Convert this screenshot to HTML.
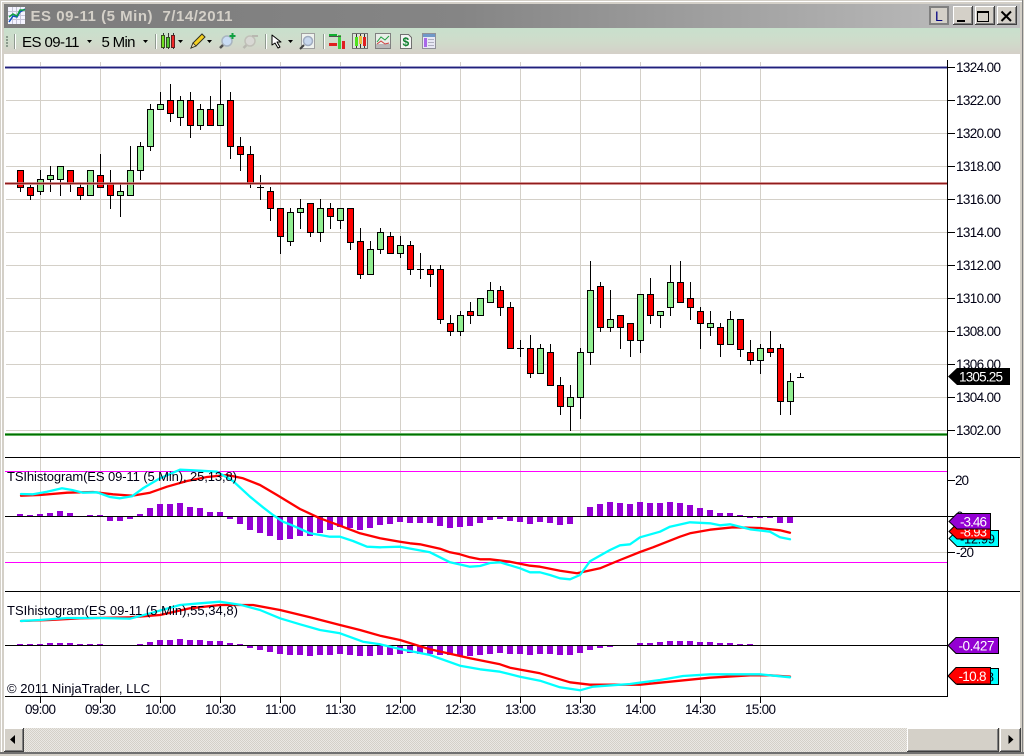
<!DOCTYPE html>
<html>
<head>
<meta charset="utf-8">
<title>ES 09-11 (5 Min) 7/14/2011</title>
<style>
html,body{margin:0;padding:0;background:#d4d0c8;width:1024px;height:756px;overflow:hidden}
svg{display:block}
text{font-family:"Liberation Sans",Arial,sans-serif;font-size:13px;fill:#000014}
.a text{font-size:13.5px}
.w{fill:#fff}
</style>
</head>
<body>
<svg width="1024" height="756" viewBox="0 0 1024 756" xmlns="http://www.w3.org/2000/svg">
<defs>
<linearGradient id="tb" x1="0" x2="1" y1="0" y2="0"><stop offset="0" stop-color="#7c7c7c"/><stop offset=".45" stop-color="#858585"/><stop offset="1" stop-color="#c0c0c0"/></linearGradient>
<linearGradient id="tl" x1="0" x2="0" y1="0" y2="1"><stop offset="0" stop-color="#c8e0cc"/><stop offset=".5" stop-color="#cfdccb"/><stop offset="1" stop-color="#d4d0c8"/></linearGradient>
<pattern id="dith" width="2" height="2" patternUnits="userSpaceOnUse"><rect width="2" height="2" fill="#eae8e4"/><rect width="1" height="1" fill="#d4d0c8"/><rect x="1" y="1" width="1" height="1" fill="#d4d0c8"/></pattern>
</defs>

<!-- window frame -->
<rect width="1024" height="756" fill="#d4d0c8"/>
<rect x="1" y="1" width="1022" height="1" fill="#fff"/>
<rect x="1" y="1" width="1" height="752" fill="#fff"/>
<rect x="1022" y="0" width="1" height="754" fill="#808080"/>
<rect x="0" y="752" width="1024" height="2" fill="#707070"/>
<rect x="4" y="4" width="1016" height="24" fill="url(#tb)"/>

<!-- title icon -->
<g shape-rendering="crispEdges">
<rect x="8" y="7" width="17" height="17" fill="#f4f4ff"/>
<path d="M8 11.5h17M8 15.5h17M8 19.5h17M12.5 7v17M16.5 7v17M20.5 7v17" stroke="#c4c4d8" fill="none"/>
</g>
<path d="M9 22l4-6 4 1 3-5 5-3" stroke="#1050c0" stroke-width="1.5" fill="none"/>
<path d="M9 17l4-3 4 2 3-6 5 0" stroke="#10a040" stroke-width="1.5" fill="none"/>
<text x="30.5" y="21" textLength="202" style="font-size:15px;font-weight:bold;fill:#d4d0c8">ES 09-11 (5 Min)&#160;&#160;7/14/2011</text>

<!-- window buttons -->
<g shape-rendering="crispEdges">
<rect x="929" y="6" width="20" height="19" fill="#808080"/><rect x="931" y="8" width="16" height="15" fill="#d4d0c8"/>
<rect x="953" y="6" width="20" height="19" fill="#404040"/><rect x="953" y="6" width="19" height="18" fill="#fff"/><rect x="954" y="7" width="18" height="17" fill="#808080"/><rect x="954" y="7" width="17" height="16" fill="#d4d0c8"/>
<rect x="975" y="6" width="20" height="19" fill="#404040"/><rect x="975" y="6" width="19" height="18" fill="#fff"/><rect x="976" y="7" width="18" height="17" fill="#808080"/><rect x="976" y="7" width="17" height="16" fill="#d4d0c8"/>
<rect x="997" y="6" width="20" height="19" fill="#404040"/><rect x="997" y="6" width="19" height="18" fill="#fff"/><rect x="998" y="7" width="18" height="17" fill="#808080"/><rect x="998" y="7" width="17" height="16" fill="#d4d0c8"/>
<rect x="957" y="20" width="8" height="2" fill="#000"/>
<path d="M977.5 11.5h11v10h-11z" fill="none" stroke="#000"/><rect x="977" y="11" width="12" height="2" fill="#000"/>
</g>
<path d="M1001.5 11.5l9.5 9.5M1011 11.5l-9.5 9.5" stroke="#000" stroke-width="2" fill="none"/>
<text x="935" y="21" style="font-size:14px;fill:#000080">L</text>

<!-- toolbar -->
<rect x="4" y="28" width="1016" height="26" fill="url(#tl)"/>
<g shape-rendering="crispEdges">
<rect x="6" y="36" width="2" height="2" fill="#8a9a8c"/><rect x="6" y="39" width="2" height="2" fill="#8a9a8c"/><rect x="6" y="42" width="2" height="2" fill="#8a9a8c"/><rect x="6" y="45" width="2" height="2" fill="#8a9a8c"/>
<path d="M14.5 34v15M155.5 34v15M265.5 34v15M323.5 34v15" stroke="#8f9a90"/>
<path d="M15.5 34v15M156.5 34v15M266.5 34v15M324.5 34v15" stroke="#fff"/>
</g>
<text x="22" y="47" textLength="57.5" style="font-size:15px;fill:#000">ES 09-11</text>
<text x="101.5" y="47" textLength="34" style="font-size:15px;fill:#000">5 Min</text>
<path d="M87 40h5l-2.500 3zM143 40h5l-2.500 3zM178 40h5l-2.500 3zM207 40h5l-2.500 3zM288 40h5l-2.500 3z" fill="#000"/>

<!-- candle icon -->
<g shape-rendering="crispEdges">
<path d="M163.500 33v16M168.500 33v16M173.500 33v16" stroke="#333"/>
<path d="M161.500 35.500h3v12h-3z" fill="#70e020" stroke="#385020"/>
<path d="M166.500 37.500h3v10h-3z" fill="#50c830" stroke="#305020"/>
<path d="M171.500 35.500h3v12h-3z" fill="#f02828" stroke="#602020"/>
</g>
<!-- pencil -->
<path d="M191 48l2-5 9-9 3 3-9 9z" fill="#f4d020" stroke="#303020" stroke-width="1"/>
<path d="M191 48l2-5 3 3z" fill="#f0e0b0" stroke="#303020" stroke-width=".8"/>
<!-- zoom in -->
<path d="M220 48l4-4" stroke="#505050" stroke-width="2.500"/>
<circle cx="227" cy="41" r="5" fill="#c8dcf4" stroke="#a8b4c0" stroke-width="1.500"/>
<path d="M232.500 33v6M229.500 36h6" stroke="#10a040" stroke-width="2"/>
<!-- zoom out -->
<path d="M243.500 48l4-4" stroke="#b8b8b0" stroke-width="2.500"/>
<circle cx="250" cy="41" r="5" fill="#d8d8d4" stroke="#c0c0b8" stroke-width="1.500"/>
<path d="M252 36h6" stroke="#b8b8b0" stroke-width="2"/>
<!-- cursor -->
<path d="M272 35v10l3-2 3 5 2-1-3-5h4z" fill="#fff" stroke="#000" stroke-width="1" stroke-linejoin="round"/>
<!-- magnifier box -->
<rect x="301.500" y="33.500" width="13" height="15" fill="#eef2ee" stroke="#a0a0a0"/>
<circle cx="308" cy="41" r="4.500" fill="#c8d8ee" stroke="#a0acc0" stroke-width="1.500"/>
<path d="M300 49l4-4" stroke="#404040" stroke-width="2"/>
<!-- data series -->
<g shape-rendering="crispEdges">
<rect x="329" y="34" width="8" height="2" fill="#10b030"/><rect x="329" y="43" width="8" height="3" fill="#e02020"/>
<rect x="338" y="35" width="3" height="14" fill="#40d040"/><rect x="342" y="41" width="3" height="8" fill="#e02020"/>
<path d="M329 36.500h12" stroke="#505050"/>
<!-- chart box -->
<rect x="352.500" y="33.500" width="15" height="15" fill="#dce4d8" stroke="#707070"/>
<path d="M356.500 34v14M360.500 34v14M364.500 34v14" stroke="#333"/>
<rect x="355" y="37" width="3" height="9" fill="#50e020"/><rect x="359" y="36" width="3" height="8" fill="#e8c040"/><rect x="363" y="37" width="3" height="9" fill="#e02020"/>
<!-- strategies -->
<rect x="375.500" y="33.500" width="15" height="15" fill="#e8eee8" stroke="#808080"/>
<rect x="376" y="44" width="14" height="4" fill="#b8b8b8"/>
</g>
<path d="M377 42l4-5 4 3 4-4" stroke="#20a040" fill="none"/>
<path d="M377 44l4-3 4 3 4-1" stroke="#d04040" fill="none"/>
<!-- dollar doc -->
<path d="M400.500 34.500h8l3 3v11h-11z" fill="#f4f4f4" stroke="#707070" shape-rendering="crispEdges"/>
<text x="402.500" y="46" style="font-size:12px;font-weight:bold;fill:#108030">$</text>
<!-- properties -->
<g shape-rendering="crispEdges">
<rect x="422.500" y="33.500" width="13" height="15" fill="#e8e8f4" stroke="#909098"/>
<rect x="423" y="34" width="12" height="3" fill="#7098c8"/>
<rect x="424" y="38" width="3" height="9" fill="#a868e8"/>
<path d="M428 39.500h6M428 42.500h6M428 45.500h6" stroke="#b0b0c0"/>
</g>

<!-- chart background -->
<rect x="4" y="54" width="1016" height="674" fill="#fff"/>

<!-- grid -->
<g shape-rendering="crispEdges" stroke="#d4d0c8" fill="none">
<path d="M40.500 62V696M100.500 62V696M160.500 62V696M220.500 62V696M280.500 62V696M340.500 62V696M400.500 62V696M460.500 62V696M520.500 62V696M580.500 62V696M640.500 62V696M700.500 62V696M760.500 62V696"/>
<path d="M6 67.500H947M6 100.500H947M6 133.500H947M6 166.500H947M6 199.500H947M6 232.500H947M6 265.500H947M6 298.500H947M6 331.500H947M6 364.500H947M6 397.500H947M6 430.500H947M6 552.500H947"/>
</g>

<!-- wicks -->
<path shape-rendering="crispEdges" stroke="#000" fill="none" d="M20.500 170V192M30.500 185V200M40.500 170V195M50.500 166V192M60.500 166V196M70.500 170V192M80.500 184V200M100.500 154V187M110.500 170V209M120.500 184V217M130.500 146V195M140.500 142V180M150.500 104V151M160.500 92V109M170.500 84V122M180.500 96V126M190.500 92V138M200.500 104V130M210.500 96V125M220.500 80V125M230.500 92V159M240.500 137V171M250.500 146V188M260.500 175V200M270.500 187V221M280.500 208V254M290.500 208V246M300.500 199V229M310.500 203V237M320.500 199V242M330.500 203V229M340.500 208V229M350.500 208V250M360.500 228V279M370.500 241V274M380.500 228V254M390.500 232V253M400.500 236V258M410.500 241V275M420.500 253V279M430.500 265V287M440.500 265V324M450.500 315V336M460.500 311V336M470.500 302V324M490.500 282V302M500.500 286V316M510.500 302V348M520.500 340V357M530.500 335V378M540.500 344V373M550.500 344V385M560.500 377V415M570.500 385V431M580.500 348V419M590.500 261V365M600.500 282V332M610.500 290V332M620.500 315V349M630.500 323V357M640.500 294V353M650.500 278V324M660.500 311V328M670.500 265V316M680.500 261V302M690.500 282V320M700.500 307V349M710.500 311V336M720.500 323V357M730.500 311V344M740.500 319V357M750.500 340V365M760.500 344V374M770.500 331V357M780.500 344V415M790.500 373V415M800.500 373V377M257 187.500H264M417 269.500H424M517 348.500H524M797 377.500H804"/>

<!-- red bodies -->
<path shape-rendering="crispEdges" fill="#ff0000" stroke="#000" d="M17.500 170.500h6v17h-6zM27.500 187.500h6v8h-6zM67.500 170.500h6v13h-6zM77.500 187.500h6v8h-6zM97.500 175.500h6v12h-6zM107.500 183.500h6v12h-6zM167.500 100.500h6v13h-6zM187.500 100.500h6v25h-6zM207.500 109.500h6v16h-6zM227.500 100.500h6v46h-6zM237.500 146.500h6v8h-6zM247.500 154.500h6v29h-6zM267.500 191.500h6v17h-6zM277.500 208.500h6v28h-6zM307.500 203.500h6v29h-6zM327.500 208.500h6v8h-6zM347.500 208.500h6v34h-6zM357.500 241.500h6v33h-6zM387.500 236.500h6v17h-6zM407.500 245.500h6v24h-6zM427.500 269.500h6v5h-6zM437.500 269.500h6v50h-6zM447.500 323.500h6v8h-6zM467.500 311.500h6v4h-6zM497.500 290.500h6v17h-6zM507.500 307.500h6v41h-6zM527.500 348.500h6v25h-6zM547.500 352.500h6v33h-6zM557.500 385.500h6v21h-6zM597.500 286.500h6v41h-6zM617.500 315.500h6v12h-6zM627.500 323.500h6v17h-6zM647.500 294.500h6v21h-6zM677.500 282.500h6v20h-6zM687.500 298.500h6v9h-6zM697.500 311.500h6v12h-6zM717.500 327.500h6v17h-6zM737.500 319.500h6v30h-6zM747.500 352.500h6v8h-6zM767.500 348.500h6v4h-6zM777.500 348.500h6v53h-6z"/>
<!-- green bodies -->
<path shape-rendering="crispEdges" fill="#90ee90" stroke="#000" d="M37.500 179.500h6v12h-6zM47.500 175.500h6v4h-6zM57.500 166.500h6v13h-6zM87.500 170.500h6v25h-6zM117.500 191.500h6v4h-6zM127.500 170.500h6v25h-6zM137.500 146.500h6v24h-6zM147.500 109.500h6v37h-6zM157.500 104.500h6v5h-6zM177.500 100.500h6v17h-6zM197.500 109.500h6v16h-6zM217.500 104.500h6v21h-6zM287.500 212.500h6v29h-6zM297.500 208.500h6v4h-6zM317.500 208.500h6v24h-6zM337.500 208.500h6v12h-6zM367.500 249.500h6v25h-6zM377.500 232.500h6v17h-6zM397.500 245.500h6v8h-6zM457.500 315.500h6v16h-6zM477.500 298.500h6v17h-6zM487.500 290.500h6v12h-6zM537.500 348.500h6v25h-6zM567.500 397.500h6v9h-6zM577.500 352.500h6v45h-6zM587.500 290.500h6v62h-6zM607.500 319.500h6v8h-6zM637.500 294.500h6v46h-6zM657.500 311.500h6v4h-6zM667.500 282.500h6v25h-6zM707.500 323.500h6v4h-6zM727.500 319.500h6v25h-6zM757.500 348.500h6v12h-6zM787.500 381.500h6v20h-6z"/>

<!-- horizontal drawn lines -->
<g shape-rendering="crispEdges">
<rect x="5" y="66" width="942" height="3" fill="#9a9ac8"/><rect x="5" y="67" width="942" height="1" fill="#20207a"/>
<rect x="5" y="182" width="942" height="3" fill="#c87878" fill-opacity=".8"/><rect x="5" y="183" width="942" height="1" fill="#901c1c"/>
<rect x="5" y="433" width="942" height="3" fill="#60b060"/><rect x="5" y="434" width="942" height="1" fill="#007000"/>
</g>

<!-- panel lines -->
<g shape-rendering="crispEdges" fill="none">
<path d="M5 471.500H947M5 562.500H947" stroke="#ff00ff"/>
</g>

<!-- histogram 1 -->
<path shape-rendering="crispEdges" stroke="#9400d3" stroke-width="6" fill="none" d="M20 514V516M30 515V516M40 514V516M50 513V516M60 511V516M70 513V516M90 515V516M100 515V516M110 517V521M120 517V521M130 517V519M140 514V516M150 508V516M160 504V516M170 504V516M180 503V516M190 507V516M200 508V516M210 512V516M220 512V516M230 517V519M240 517V524M250 517V530M260 517V533M270 517V536M280 517V540M290 517V539M300 517V536M310 517V536M320 517V533M330 517V530M340 517V527M350 517V528M360 517V530M370 517V528M380 517V525M390 517V524M400 517V522M410 517V523M420 517V523M430 517V523M440 517V526M450 517V528M460 517V527M470 517V526M480 517V523M490 517V520M500 517V519M510 517V521M520 517V522M530 517V524M540 517V522M550 517V523M560 517V525M570 517V524M590 507V516M600 504V516M610 502V516M620 503V516M630 504V516M640 502V516M650 503V516M660 503V516M670 502V516M680 503V516M690 505V516M700 508V516M710 510V516M720 513V516M730 513V516M740 515V516M750 517V518M760 517V518M770 517V518M780 517V523M790 517V523"/>
<!-- histogram 2 -->
<path shape-rendering="crispEdges" stroke="#9400d3" stroke-width="6" fill="none" d="M20 644V645M30 644V645M40 644V645M50 643V645M60 643V645M70 643V645M80 644V645M90 644V645M100 644V645M140 644V645M150 642V645M160 640V645M170 640V645M180 639V645M190 640V645M200 640V645M210 641V645M220 641V645M230 643V645M240 644V645M250 646V648M260 646V650M270 646V652M280 646V654M290 646V655M300 646V655M310 646V656M320 646V655M330 646V655M340 646V654M350 646V655M360 646V656M370 646V656M380 646V655M390 646V655M400 646V654M410 646V653M420 646V654M430 646V654M440 646V655M450 646V655M460 646V656M470 646V656M480 646V655M490 646V654M500 646V653M510 646V654M520 646V654M530 646V655M540 646V654M550 646V654M560 646V655M570 646V655M580 646V653M590 646V650M600 646V648M610 646V647M640 643V645M650 643V645M660 642V645M670 641V645M680 641V645M690 641V645M700 642V645M710 642V645M720 643V645M730 643V645M740 644V645M750 644V645"/>

<!-- axes & separators -->
<g shape-rendering="crispEdges" stroke="#000" fill="none">
<path d="M5 516.500H947M5 645.500H947"/>
<path d="M5 457.500H1020M5 591.500H1020M5 696.500H948"/>
<path d="M947.500 60V697"/>
<path d="M947 67.500h8M947 100.500h8M947 133.500h8M947 166.500h8M947 199.500h8M947 232.500h8M947 265.500h8M947 298.500h8M947 331.500h8M947 364.500h8M947 397.500h8M947 430.500h8M947 480.500h8M947 516.500h8M947 552.500h8"/>
<path d="M40.500 697v6M100.500 697v6M160.500 697v6M220.500 697v6M280.500 697v6M340.500 697v6M400.500 697v6M460.500 697v6M520.500 697v6M580.500 697v6M640.500 697v6M700.500 697v6M760.500 697v6"/>
</g>

<!-- indicator lines panel 1 -->
<g fill="none" stroke-width="2.300" stroke-linejoin="round" stroke-linecap="round">
<polyline stroke="#ff0000" points="21,495.700 40,495 67,492.700 93,492 113,494.300 132,495.700 150,492.700 167,486.700 187,481 207,477 227,475 243,478.300 260,485 277,495 300,509 320,518.300 340,525.700 360,533.300 380,538.300 400,541.700 410,543.300 420,544.300 440,548.700 450,552.300 460,554.300 470,557.300 480,559.300 490,559.300 510,561.700 530,565.700 540,566.700 560,570.700 577,573.300 600,568.300 620,560 640,552 653,547.300 680,536.700 690,533.300 710,529.700 733,527.300 760,528 780,530.300 790,532.700"/>
<polyline stroke="#00ffff" points="21,494 33,494.300 47,491.700 62,488.300 72,490 83,492.700 97,492.300 110,497 120,498.300 132,496.300 143,488.300 160,478.300 180,469.700 200,470.700 217,471.700 233,481 250,496.700 263,507.300 273,515 283,521.700 293,525.700 310,533.300 330,536.700 340,536.700 353,541 367,546.700 380,547.300 400,546.700 430,552.300 450,562.300 470,566.700 480,566 490,563 500,562.300 520,568.300 530,572.300 540,572.300 550,575 560,578.300 570,579.300 580,575 590,561.300 610,550 620,545.300 630,544.300 640,537.300 660,531.700 670,526.700 690,522.300 710,523.300 720,525.300 730,524.300 750,529.300 770,531.700 780,537.300 790,539.300"/>
<!-- panel 2 lines -->
<polyline stroke="#ff0000" points="21,621 50,620 80,618.300 130,617.300 160,615 190,608.300 220,605 253,605 280,610 310,617.300 340,625 360,630 380,635.700 400,640 430,649.300 470,658.300 500,664.300 510,667.700 540,673.300 570,682.300 590,684.700 640,684.700 670,681.700 710,677.700 750,675.300 770,675.300 790,676.700"/>
<polyline stroke="#00ffff" points="21,621 40,620 67,618 100,618 130,618.700 150,613.300 180,605 200,603.300 220,601.700 240,604.700 260,610 280,618.300 300,624.300 320,630 340,633.300 363,641.700 380,644.300 400,649 430,655 460,665.700 480,669.300 500,671.700 520,676.700 540,680.700 560,687.300 580,690.300 593,686.700 630,684 660,680 683,676 710,674.300 760,674.300 790,677.300"/>
</g>

<!-- labels -->
<text x="7" y="481" textLength="230">TSIhistogram(ES 09-11 (5 Min), 25,13,8)</text>
<text x="7" y="615" textLength="231">TSIhistogram(ES 09-11 (5 Min),55,34,8)</text>
<text x="7" y="693" textLength="143">© 2011 NinjaTrader, LLC</text>

<g class="a">
<text x="956" y="72" textLength="45">1324.00</text>
<text x="956" y="105" textLength="45">1322.00</text>
<text x="956" y="138" textLength="45">1320.00</text>
<text x="956" y="171" textLength="45">1318.00</text>
<text x="956" y="204" textLength="45">1316.00</text>
<text x="956" y="237" textLength="45">1314.00</text>
<text x="956" y="270" textLength="45">1312.00</text>
<text x="956" y="303" textLength="45">1310.00</text>
<text x="956" y="336" textLength="45">1308.00</text>
<text x="956" y="369" textLength="45">1306.00</text>
<text x="956" y="402" textLength="45">1304.00</text>
<text x="956" y="435" textLength="45">1302.00</text>
<text x="955" y="485" textLength="14">20</text>
<text x="956" y="521">0</text>
<text x="956" y="557" textLength="18">-20</text>
</g>

<g class="a" text-anchor="middle">
<text x="40.500" y="714" textLength="31">09:00</text>
<text x="100.500" y="714" textLength="31">09:30</text>
<text x="160.500" y="714" textLength="31">10:00</text>
<text x="220.500" y="714" textLength="31">10:30</text>
<text x="280.500" y="714" textLength="31">11:00</text>
<text x="340.500" y="714" textLength="31">11:30</text>
<text x="400.500" y="714" textLength="31">12:00</text>
<text x="460.500" y="714" textLength="31">12:30</text>
<text x="520.500" y="714" textLength="31">13:00</text>
<text x="580.500" y="714" textLength="31">13:30</text>
<text x="640.500" y="714" textLength="31">14:00</text>
<text x="700.500" y="714" textLength="31">14:30</text>
<text x="760.500" y="714" textLength="31">15:00</text>
</g>

<!-- value markers -->
<path d="M948 376.500L957 368H1010V385H957z" fill="#000"/>
<text x="959" y="381.500" textLength="44" class="w" style="font-size:13.5px">1305.25</text>

<path d="M949 538.500L957 530.500H998.500V546.500H957z" fill="#00ffff" stroke="#000"/>
<text x="960" y="543.500" textLength="35">-12.99</text>
<path d="M949 531.500L957 523.500H990.500V539H957z" fill="#ff0000" stroke="#000"/>
<text x="960" y="536.500" textLength="27" class="w">-8.93</text>
<path d="M949 521.500L957 513.500H990.500V529H957z" fill="#9400d3" stroke="#000"/>
<text x="960" y="526.500" textLength="27" class="w" style="font-size:13.5px">-3.46</text>

<path d="M948 645.500L956 637.500H998.500V653.500H956z" fill="#9400d3" stroke="#000"/>
<text x="958.500" y="650.500" textLength="36" class="w" style="font-size:13.5px">-0.427</text>
<path d="M949 676.500L957 668.500H998.500V684.500H957z" fill="#00ffff" stroke="#000"/>
<text x="958" y="681.500" textLength="36">-10.38</text>
<path d="M948 676L956 667.500H990.500V684H956z" fill="#ff0000" stroke="#000"/>
<text x="958.500" y="681" textLength="28" class="w" style="font-size:13.5px">-10.8</text>

<!-- scrollbar -->
<rect x="24" y="728" width="883" height="24" fill="url(#dith)"/>
<g shape-rendering="crispEdges">
<rect x="4" y="728" width="20" height="24" fill="#404040"/><rect x="4" y="728" width="19" height="23" fill="#fff"/><rect x="5" y="729" width="18" height="22" fill="#808080"/><rect x="5" y="729" width="17" height="21" fill="#d4d0c8"/>
<rect x="907" y="728" width="92" height="24" fill="#404040"/><rect x="907" y="728" width="91" height="23" fill="#fff"/><rect x="908" y="729" width="90" height="22" fill="#808080"/><rect x="908" y="729" width="89" height="21" fill="#d4d0c8"/>
<rect x="1000" y="728" width="21" height="24" fill="#404040"/><rect x="1000" y="728" width="20" height="23" fill="#fff"/><rect x="1001" y="729" width="19" height="22" fill="#808080"/><rect x="1001" y="729" width="18" height="21" fill="#d4d0c8"/>
</g>
<path d="M10 739.500l5-4.500v9z" fill="#000"/>
<path d="M1013.500 739.500l-5-4.500v9z" fill="#000"/>
</svg>
</body>
</html>
